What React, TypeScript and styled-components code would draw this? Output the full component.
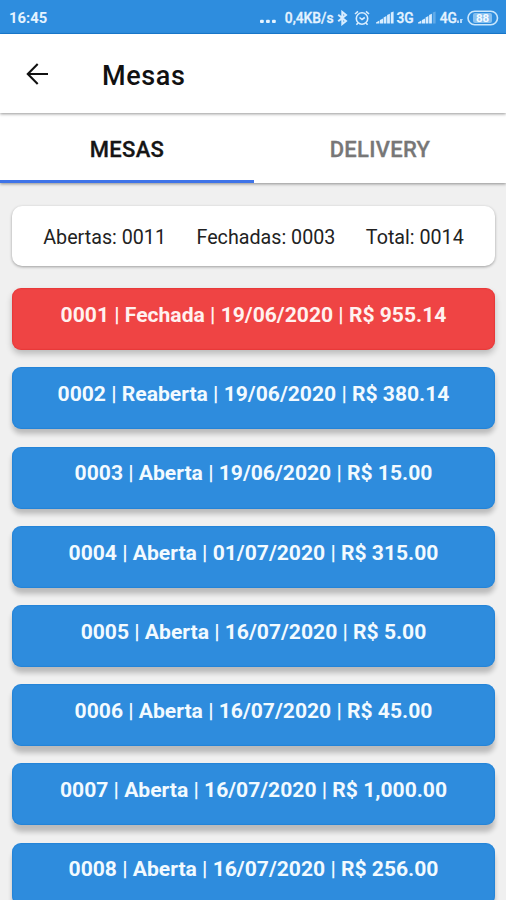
import React from "react";
import styled, { createGlobalStyle } from "styled-components";

const GlobalStyle = createGlobalStyle`
  * { box-sizing: border-box; }
  html, body { margin: 0; background: #f0f0f0; }
  body { font-family: Roboto, "Liberation Sans", sans-serif; overflow: hidden; }
`;

const Screen = styled.div`
  width: 506px;
  height: 900px;
  overflow: hidden;
  display: flex;
  flex-direction: column;
  background: #f0f0f0;
`;

const StatusBar = styled.div`
  height: 34px;
  flex: none;
  display: flex;
  align-items: center;
  justify-content: space-between;
  padding: 2px 6px 0 9px;
  background: #2e8dde;
  border-bottom: 1px solid #1a7fd8;
  color: #e4f3ff;
  font-size: 14.8px;
  font-weight: 700;
`;

const StatusIcons = styled.div`
  display: flex;
  align-items: center;
`;

const StatusText = styled.span<{ $left?: number }>`
  font-size: 13.8px;
  font-weight: 500;
  -webkit-text-stroke: 0.3px;
  margin-left: ${(p) => p.$left ?? 0}px;
`;

const Glyph = styled.svg<{ $left?: number }>`
  display: block;
  flex: none;
  margin-left: ${(p) => p.$left ?? 0}px;
`;

const Header = styled.header`
  height: 79px;
  flex: none;
  display: flex;
  align-items: center;
  padding: 0 0 0 24px;
  gap: 52px;
  background: #fff;
  z-index: 2;
  box-shadow: 0 1px 3px rgba(0, 0, 0, 0.42);
`;

const Title = styled.h1`
  margin: 0;
  padding-top: 5px;
  font-size: 27px;
  line-height: 32px;
  font-weight: 500;
  letter-spacing: 0.6px;
  color: #111;
`;

const Tabs = styled.nav`
  height: 70px;
  flex: none;
  display: grid;
  grid-template-columns: 254px 1fr;
  background: #fff;
  box-shadow: 0 1px 3px rgba(0, 0, 0, 0.42);
`;

const Tab = styled.div<{ $active?: boolean }>`
  display: flex;
  align-items: center;
  justify-content: center;
  padding-top: ${(p) => (p.$active ? 5 : 2)}px;
  font-size: 22px;
  font-weight: 500;
  letter-spacing: 0.3px;
  -webkit-text-stroke: 0.3px;
  color: ${(p) => (p.$active ? "#151515" : "#777")};
  border-bottom: ${(p) => (p.$active ? "3px solid #3f74e8" : "0")};
`;

const Content = styled.main`
  padding: 22.5px 11px 0 12px;
  display: flex;
  flex-direction: column;
`;

const Summary = styled.section`
  height: 60px;
  display: flex;
  align-items: center;
  justify-content: center;
  gap: 30.5px;
  padding: 3.5px 0 0 0;
  margin-bottom: 22.8px;
  border-radius: 10px;
  background: #fff;
  box-shadow: 0 1px 3px rgba(0, 0, 0, 0.35);
  font-size: 19.7px;
  color: #222;
  white-space: nowrap;
`;

const Rows = styled.div`
  display: flex;
  flex-direction: column;
  gap: 17.2px;
`;

const Row = styled.div<{ $closed?: boolean; $depth: number }>`
  height: 62px;
  flex: none;
  padding-top: 13.7px;
  border-radius: 9px;
  text-align: center;
  white-space: pre;
  font-size: 21.1px;
  line-height: 25px;
  font-weight: 700;
  color: ${(p) => (p.$closed ? "#fff1ef" : "#f2faff")};
  background: ${(p) => (p.$closed ? "#ef4444" : "#2e8cdd")};
  box-shadow:
    inset 0 0 1px 1px ${(p) => (p.$closed ? "rgba(222, 36, 36, .35)" : "rgba(16, 117, 208, .35)")},
    0 ${(p) => 4 + p.$depth * 0.5}px ${(p) => 6 - p.$depth * 0.2}px rgba(0, 0, 0, 0.22);
`;

const tables = [
  { id: "0001", status: "Fechada", date: "19/06/2020", total: "955.14" },
  { id: "0002", status: "Reaberta", date: "19/06/2020", total: "380.14" },
  { id: "0003", status: "Aberta", date: "19/06/2020", total: "15.00" },
  { id: "0004", status: "Aberta", date: "01/07/2020", total: "315.00" },
  { id: "0005", status: "Aberta", date: "16/07/2020", total: "5.00" },
  { id: "0006", status: "Aberta", date: "16/07/2020", total: "45.00" },
  { id: "0007", status: "Aberta", date: "16/07/2020", total: "1,000.00" },
  { id: "0008", status: "Aberta", date: "16/07/2020", total: "256.00" },
];

function Signal({ left, weak }: { left: number; weak?: boolean }) {
  return (
    <Glyph $left={left} width="18" height="13" viewBox="0 0 18 13" fill="#d8edff">
      <path d="M0 12.5V11.5L3.4 9.5V12.5z" />
      <path d="M4 12.5V9L7 7.5V12.5z" />
      <path d="M7.6 12.5V6.5L10.4 5V12.5z" />
      <path d="M11.1 12.5V4L13.9 2.7V12.5z" />
      <path d="M14.8 12.5V1.5L17.6 0.4V12.5z" opacity={weak ? 0.3 : 1} />
    </Glyph>
  );
}

export default function App() {
  return (
    <Screen>
      <GlobalStyle />
      <StatusBar>
        <span>16:45</span>
        <StatusIcons>
          <Glyph width="16" height="13" viewBox="0 0 16 13" fill="#e4f3ff">
            <rect x="0" y="8.7" width="3.8" height="3.2" rx="1" />
            <rect x="6" y="8.7" width="3.8" height="3.2" rx="1" />
            <rect x="12" y="8.7" width="3.8" height="3.2" rx="1" />
          </Glyph>
          <StatusText $left={9}>0,4KB/s</StatusText>
          <Glyph $left={3} width="11" height="16" viewBox="0 0 11 16" fill="none" stroke="#d8edff" strokeWidth="2">
            <path d="M1.2 4.7 9 11 5.3 14V2L9 5 1.2 11.3" />
          </Glyph>
          <Glyph $left={6} width="16" height="16" viewBox="0 0 16 16" fill="none" stroke="#d8edff" strokeWidth="1.6">
            <circle cx="8" cy="8.5" r="5.7" />
            <path d="M1 4 4 1.3M15 4 12 1.3M5.5 7.5 8 9.5l2.8-2M4 13l-1.6 1.8M12 13l1.6 1.8" />
          </Glyph>
          <Signal left={6} />
          <StatusText $left={3}>3G</StatusText>
          <Signal left={4} weak />
          <StatusText $left={4}>4G</StatusText>
          <Glyph $left={0} width="6" height="13" viewBox="0 0 6 13" fill="#d8edff" opacity="0.8">
            <path d="M0 12V9.5h2V12zM3 12V8h3l-1 1.5V12z" />
          </Glyph>
          <Glyph $left={4} width="33" height="16" viewBox="0 0 33 16">
            <rect x="1" y="1.3" width="29.5" height="13.4" rx="6.7" fill="none" stroke="#c9e6fc" strokeWidth="1.6" />
            <rect x="6" y="3" width="19" height="10" rx="2" fill="#86c0f0" />
            <text x="15.5" y="12.2" textAnchor="middle" fontSize="11.5" fontWeight="700" fill="#f4faff">88</text>
          </Glyph>
        </StatusIcons>
      </StatusBar>
      <Header>
        <Glyph width="26" height="24" viewBox="0 0 26 24" fill="none" stroke="#111" strokeWidth="2.1">
          <path d="M24 12H3.8M13.7 2 3.8 12l9.9 10" />
        </Glyph>
        <Title>Mesas</Title>
      </Header>
      <Tabs>
        <Tab $active>MESAS</Tab>
        <Tab>DELIVERY</Tab>
      </Tabs>
      <Content>
        <Summary>
          <span>Abertas: 0011</span>
          <span>Fechadas: 0003</span>
          <span>Total: 0014</span>
        </Summary>
        <Rows>
          {tables.map((t, i) => (
            <Row key={t.id} $closed={t.status === "Fechada"} $depth={i}>
              {`${t.id} | ${t.status} | ${t.date} | R$ ${t.total}`}
            </Row>
          ))}
        </Rows>
      </Content>
    </Screen>
  );
}
